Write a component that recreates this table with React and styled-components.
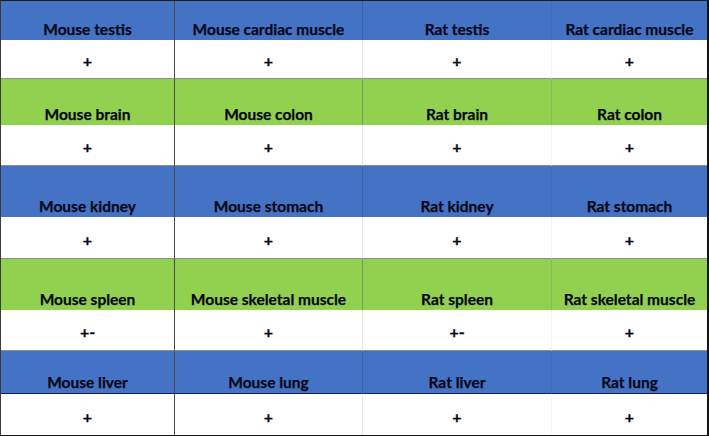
import React from "react";
import styled, { createGlobalStyle } from "styled-components";

const GlobalStyle = createGlobalStyle`
  html, body {
    margin: 0;
    padding: 0;
    background: #ffffff;
  }
  * {
    box-sizing: border-box;
  }
`;

const Table = styled.div`
  width: 709px;
  height: 436px;
  display: grid;
  grid-template-columns: 174px 188px 189px 155px;
  grid-template-rows: 39px 39px 46px 41px 51px 42px 51px 41px 43px 41px;
  border-top: 1px solid #1c1c1c;
  border-left: 1px solid #3a3a3a;
  border-right: 2px solid #141414;
  border-bottom: 1px solid #141414;
  font-family: Lato, "Liberation Sans", sans-serif;
  font-weight: 700;
  color: #080818;
`;

const lineFor = (col, header) => {
  if (col === 0) return "1px solid #4a4a4a";
  if (col === 1) return header ? "1px solid rgba(40,70,130,0.35)" : "1px solid #e6e6e6";
  if (col === 2) return header ? "1px solid rgba(40,70,130,0.15)" : "1px solid #f4f4f4";
  return "none";
};

const HeadCell = styled.div`
  display: flex;
  align-items: flex-end;
  justify-content: center;
  padding-bottom: 2px;
  font-size: 15.5px;
  white-space: nowrap;
  -webkit-text-stroke: 0.25px #080818;
  background: ${(p) => (p.$tone === "green" ? "#92d050" : "#4472c4")};
  border-right: ${(p) => lineFor(p.$col, true)};
  border-bottom: ${(p) => (p.$last ? "1px solid #16214a" : "none")};
`;

const ValueCell = styled.div`
  display: flex;
  align-items: center;
  justify-content: center;
  padding-top: 3px;
  font-size: 16px;
  -webkit-text-stroke: 0.3px #080818;
  background: #ffffff;
  border-right: ${(p) => lineFor(p.$col, false)};
  border-bottom: ${(p) => (p.$last ? "none" : "1px solid #8c8c8c")};
`;

const rows = [
  {
    tone: "blue",
    names: ["Mouse testis", "Mouse cardiac muscle", "Rat testis", "Rat cardiac muscle"],
    values: ["+", "+", "+", "+"],
  },
  {
    tone: "green",
    names: ["Mouse brain", "Mouse colon", "Rat brain", "Rat colon"],
    values: ["+", "+", "+", "+"],
  },
  {
    tone: "blue",
    names: ["Mouse kidney", "Mouse stomach", "Rat kidney", "Rat stomach"],
    values: ["+", "+", "+", "+"],
  },
  {
    tone: "green",
    names: ["Mouse spleen", "Mouse skeletal muscle", "Rat spleen", "Rat skeletal muscle"],
    values: ["+-", "+", "+-", "+"],
  },
  {
    tone: "blue",
    names: ["Mouse liver", "Mouse lung", "Rat liver", "Rat lung"],
    values: ["+", "+", "+", "+"],
  },
];

const App = () => (
  <>
    <GlobalStyle />
    <Table>
      {rows.map((row, r) => {
        const last = r === rows.length - 1;
        return (
          <React.Fragment key={r}>
            {row.names.map((name, c) => (
              <HeadCell key={"h" + c} $tone={row.tone} $col={c} $last={last}>
                {name}
              </HeadCell>
            ))}
            {row.values.map((v, c) => (
              <ValueCell key={"v" + c} $col={c} $last={last}>
                {v}
              </ValueCell>
            ))}
          </React.Fragment>
        );
      })}
    </Table>
  </>
);

export default App;
